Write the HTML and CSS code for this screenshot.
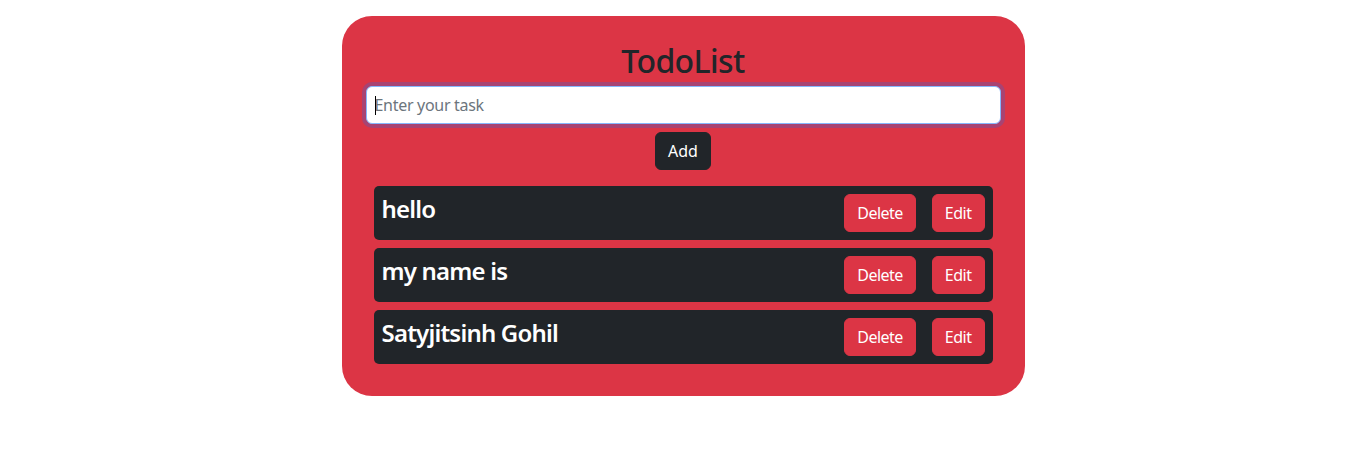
FILE: index.html
```html
<!DOCTYPE html>
<html lang="en">
<head>
<meta charset="utf-8">
<title>TodoList</title>
<link rel="stylesheet" href="styles.css">
</head>
<body>
<main class="card">
  <h2 class="title">TodoList</h2>
  <div class="field">
    <input class="task-input" type="text" placeholder="Enter your task">
    <span class="caret"></span>
  </div>
  <div class="add-row"><button class="btn btn-dark">Add</button></div>
  <ul class="list">
    <li class="item">
      <h4 class="item-text">hello</h4>
      <div class="actions"><button class="btn btn-red">Delete</button><button class="btn btn-red">Edit</button></div>
    </li>
    <li class="item">
      <h4 class="item-text">my name is</h4>
      <div class="actions"><button class="btn btn-red">Delete</button><button class="btn btn-red">Edit</button></div>
    </li>
    <li class="item">
      <h4 class="item-text">Satyjitsinh Gohil</h4>
      <div class="actions"><button class="btn btn-red">Delete</button><button class="btn btn-red">Edit</button></div>
    </li>
  </ul>
</main>
</body>
</html>
```
FILE: styles.css
```css
* { box-sizing: border-box; }
body {
  margin: 0;
  background: #fff;
  font-family: "Noto Sans", "Open Sans", sans-serif;
  color: #212529;
}
.card {
  width: 683px;
  margin: 16px auto 0;
  background: #dc3545;
  border-radius: 30px;
  padding: 24px 24px 32px;
}
.title {
  margin: 0 0 6px;
  padding-top: 2px;
  text-align: center;
  font-size: 32px;
  font-weight: 500;
  line-height: 38.4px;
  letter-spacing: -0.6px;
  color: #212529;
}
.field { position: relative; }
.task-input {
  display: block;
  width: 100%;
  height: 38px;
  padding: 6px 8px;
  font-family: inherit;
  font-size: 16px;
  letter-spacing: -0.3px;
  color: #212529;
  background: #fff;
  border: 1px solid #86b7fe;
  border-radius: 6px;
  box-shadow: 0 0 0 4px rgba(13, 110, 253, 0.25);
  outline: none;
}
.task-input::placeholder { color: #6c757d; }
.caret {
  position: absolute;
  left: 9px;
  top: 10px;
  width: 1px;
  height: 19px;
  background: #000;
}
.add-row {
  display: flex;
  justify-content: center;
  margin-top: 8px;
}
.btn {
  font-family: inherit;
  font-size: 16px;
  line-height: 24px;
  letter-spacing: -0.5px;
  padding: 6px 12px;
  border: 1px solid transparent;
  border-radius: 6px;
  color: #fff;
  cursor: pointer;
}
.btn-dark { background: #212529; border-color: #212529; letter-spacing: 0; }
.btn-red { background: #dc3545; border-color: #dc3545; }
.list {
  list-style: none;
  margin: 16px 8px 0;
  padding: 0;
  display: flex;
  flex-direction: column;
  gap: 8px;
}
.item {
  display: flex;
  justify-content: space-between;
  align-items: flex-start;
  background: #212529;
  border-radius: 5px;
  padding: 8px;
}
.item-text {
  margin: 0;
  padding-top: 1px;
  font-size: 24px;
  font-weight: 600;
  line-height: 28.8px;
  letter-spacing: -0.8px;
  color: #fff;
}
.actions {
  display: flex;
  gap: 16px;
}
```
